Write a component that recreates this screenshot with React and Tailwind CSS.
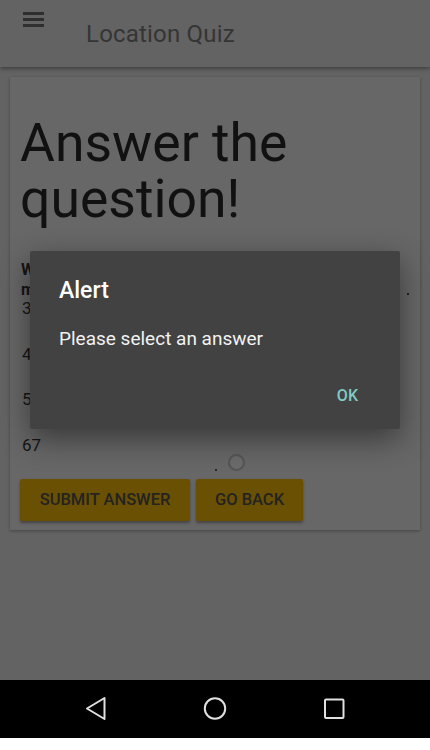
export default function App() {
  const options = ["34", "45", "56", "67"];
  return (
    <div className="relative flex min-h-[750px] w-[430px] flex-col bg-white font-['Roboto',sans-serif]">
      <div className="flex h-[680px] flex-col bg-[#636363]">
        {/* Toolbar */}
        <div className="flex h-[67px] shrink-0 items-start bg-[#636363] shadow-[0_2px_4px_rgba(0,0,0,0.35)]">
          <div className="ml-[23px] mt-[12px] flex w-[21px] flex-col gap-[3.5px]">
            <span className="block h-[2.5px] w-full bg-[#2e2e2e]" />
            <span className="block h-[2.5px] w-full bg-[#2e2e2e]" />
            <span className="block h-[2.5px] w-full bg-[#2e2e2e]" />
          </div>
          <div className="ml-[42px] mt-[19.5px] text-[24px] leading-[28px] tracking-[0.2px] text-[#353535]">
            Location Quiz
          </div>
        </div>

        {/* Card */}
        <div className="mx-[10px] mt-[10px] flex flex-col bg-[#676767] px-[10px] pb-[9px] pt-[38px] shadow-[0_1px_3px_rgba(0,0,0,0.3)]">
          <h1 className="text-[53.5px] leading-[56px] text-[#111111]">
            Answer the
            <br />
            question!
          </h1>

          <div className="mt-[33px] pl-[1px] text-[16px] font-bold leading-[19.5px] text-[#151515]">
            <div>What is the population of the city shown</div>
            <div className="flex items-end justify-between">
              <span>marked on the map, in millions?</span>
              <span className="mb-[4px] mr-[1px] block h-[2px] w-[2px] bg-[#222]" />
            </div>
          </div>

          <div className="flex flex-col gap-[9.5px]">
            {options.map((o) => (
              <div key={o} className="flex flex-col">
                <div className="h-[18px] pl-[2px] text-[17px] leading-[18px] text-[#151515]">{o}</div>
                <div className="flex h-[18px] items-center pl-[195px]">
                  <span className="mt-[14px] block h-[2px] w-[2px] bg-[#2a2a2a]" />
                  <span className="ml-[11px] block h-[17px] w-[17px] rounded-full border-2 border-[#555555] bg-[#6b6b6b]" />
                </div>
              </div>
            ))}
          </div>

          <div className="mt-[7.5px] flex gap-[6px]">
            <button className="h-[42px] w-[170px] rounded-[2px] bg-[#6a5002] text-[16.5px] font-medium text-[#232323] shadow-[0_2px_3px_rgba(0,0,0,0.35)]">
              SUBMIT ANSWER
            </button>
            <button className="h-[42px] w-[107px] rounded-[2px] bg-[#6a5002] text-[16.5px] font-medium text-[#232323] shadow-[0_2px_3px_rgba(0,0,0,0.35)]">
              GO BACK
            </button>
          </div>
        </div>
      </div>

      {/* Nav bar */}
      <div className="flex h-[58px] items-center bg-black">
        <svg width="430" height="58" viewBox="0 680 430 58" className="block">
          <path d="M104.5 698 L87 708.5 L104.5 719 Z" fill="none" stroke="#e0e0e0" strokeWidth="2" strokeLinejoin="round" />
          <circle cx="215" cy="708.5" r="10.2" fill="none" stroke="#e0e0e0" strokeWidth="2" />
          <rect x="325" y="699.5" width="18.5" height="18.5" rx="1" fill="none" stroke="#e0e0e0" strokeWidth="2" />
        </svg>
      </div>
      <div className="h-[12px] bg-white" />

      {/* Alert dialog */}
      <div className="absolute left-[30px] top-[250.5px] w-[370px] rounded-[2px] bg-[#424242] pb-[23px] pl-[29px] pr-[42px] pt-[26px] shadow-[0_10px_30px_rgba(0,0,0,0.45)]">
        <div className="text-[23px] font-medium leading-[28px] text-white">Alert</div>
        <div className="mt-[21px] text-[19px] leading-[25px] text-[#f2f2f2]">Please select an answer</div>
        <div className="mt-[35px] flex justify-end">
          <span className="text-[16px] font-medium leading-[20px] text-[#80cbc4]">OK</span>
        </div>
      </div>
    </div>
  );
}
